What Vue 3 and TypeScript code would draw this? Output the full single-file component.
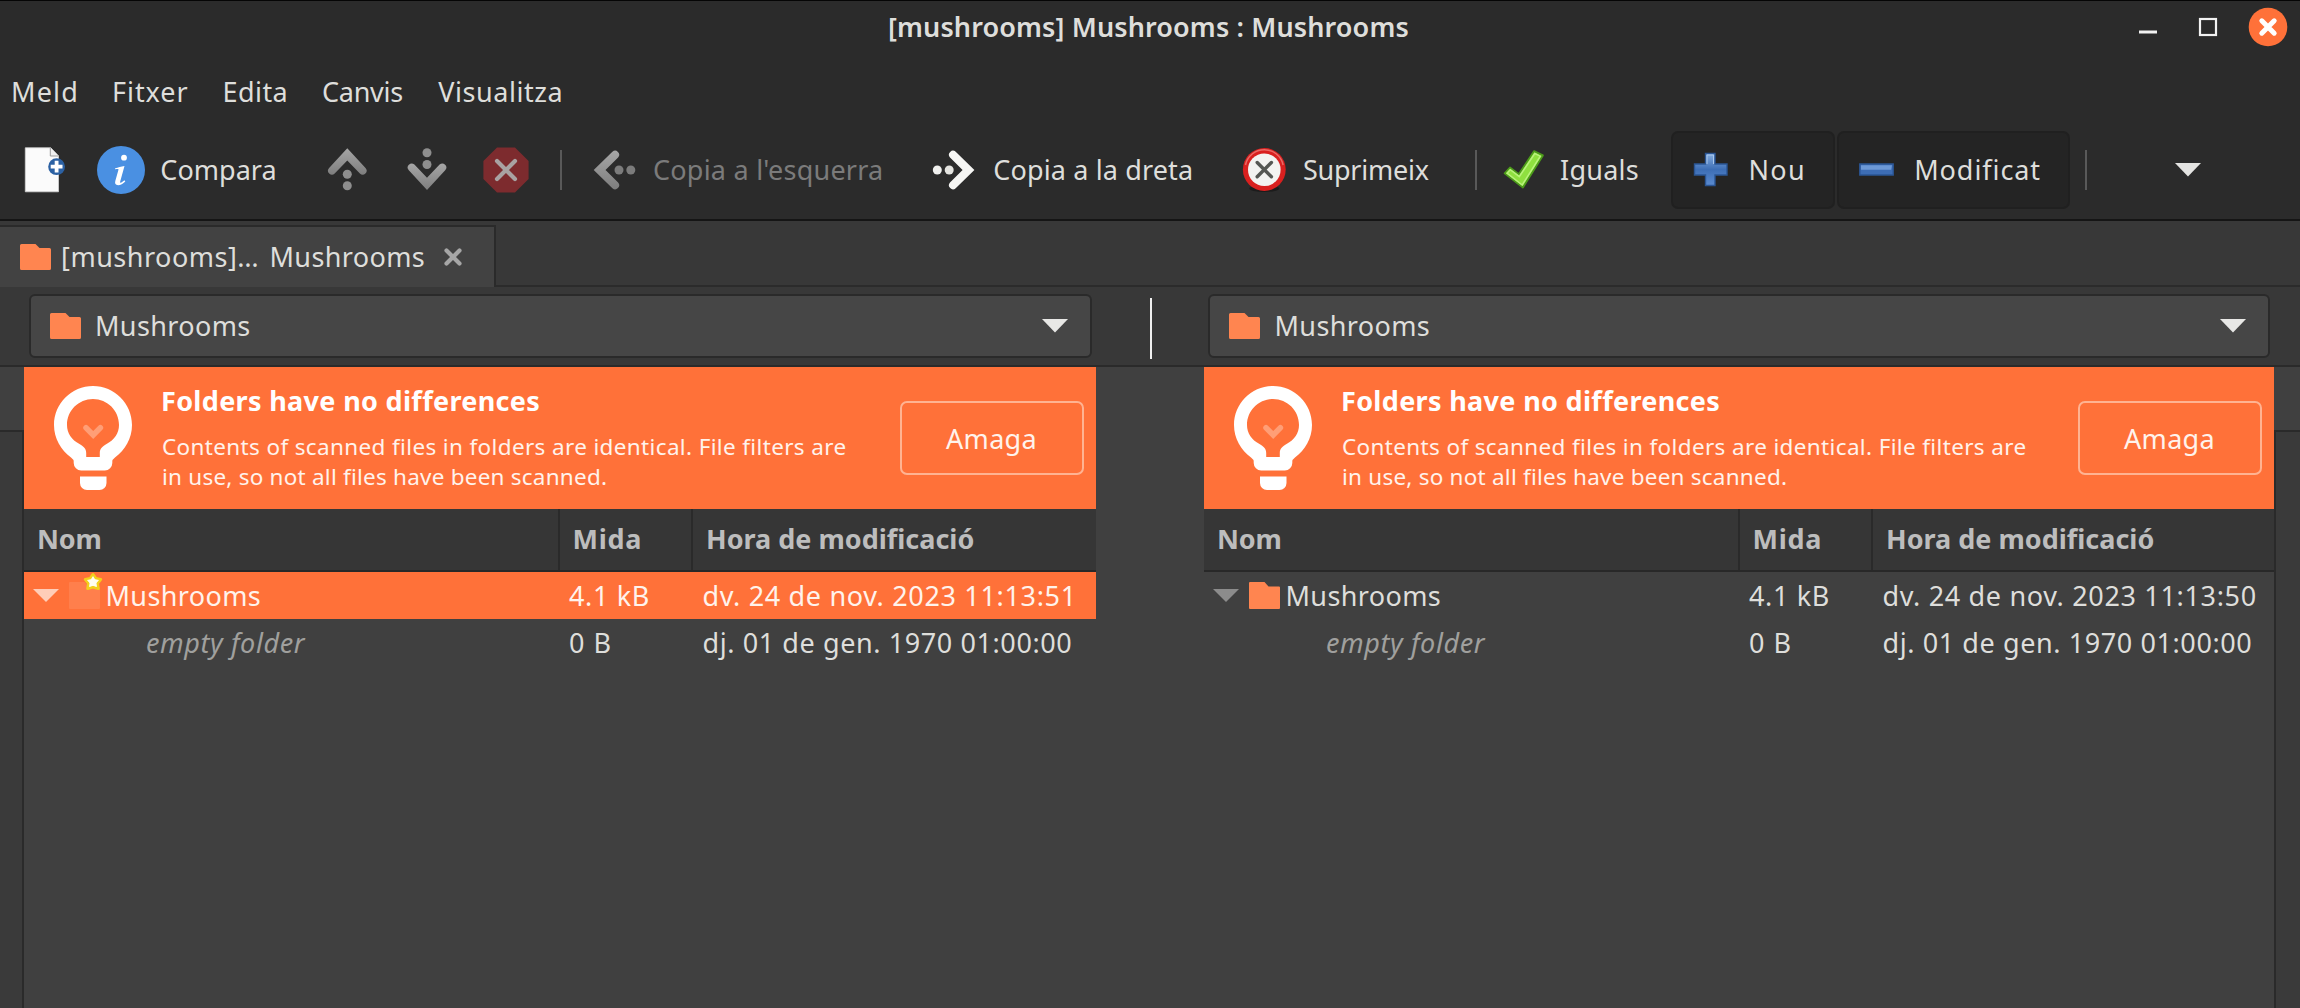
<script setup lang="ts">
interface Label {
  text: string
  spacing: number
}

interface Row {
  name: string
  nameSpacing: number
  size: string
  sizeSpacing: number
  date: string
  dateSpacing: number
  kind: 'folder' | 'empty'
}

interface Pane {
  id: string
  selected: boolean
  rows: Row[]
}

const menus: Label[] = [
  { text: 'Meld', spacing: 1.2 },
  { text: 'Fitxer', spacing: 0.95 },
  { text: 'Edita', spacing: 0.42 },
  { text: 'Canvis', spacing: -0.27 },
  { text: 'Visualitza', spacing: 0.57 },
]

const emptyRow: Row = {
  name: 'empty folder',
  nameSpacing: 0.6,
  size: '0 B',
  sizeSpacing: 1,
  date: 'dj. 01 de gen. 1970 01:00:00',
  dateSpacing: 0.59,
  kind: 'empty',
}

const folderRow = (time: string): Row => ({
  name: 'Mushrooms',
  nameSpacing: 0.38,
  size: '4.1 kB',
  sizeSpacing: 0.65,
  date: `dv. 24 de nov. 2023 ${time}`,
  dateSpacing: 0.67,
  kind: 'folder',
})

const panes: Pane[] = [
  { id: 'left', selected: true, rows: [folderRow('11:13:51'), emptyRow] },
  { id: 'right', selected: false, rows: [folderRow('11:13:50'), emptyRow] },
]

const ls = (px: number) => ({ letterSpacing: `${px}px` })
</script>

<template>
  <div class="window">
    <header class="chrome">
      <div class="titlebar">
        <span class="title">[mushrooms] Mushrooms : Mushrooms</span>
        <div class="controls">
          <svg width="20" height="20" viewBox="0 0 20 20"><path d="M1 13.5h18v3H1z" fill="#f2f2f2" /></svg>
          <svg width="20" height="20" viewBox="0 0 20 20"><rect x="2" y="2" width="16" height="16" fill="none" stroke="#f2f2f2" stroke-width="2.2" /></svg>
          <svg width="40" height="40" viewBox="0 0 40 40">
            <circle cx="20" cy="20" r="19.3" fill="#ff7139" />
            <path d="M13.8 13.8l12.4 12.4M26.2 13.8L13.8 26.2" stroke="#fff" stroke-width="5" stroke-linecap="round" />
          </svg>
        </div>
      </div>

      <nav class="menubar">
        <span v-for="m in menus" :key="m.text" :style="ls(m.spacing)">{{ m.text }}</span>
      </nav>

      <div class="toolbar">
        <svg class="new-doc" width="50" height="50" viewBox="22 143.5 50 50">
          <defs>
            <linearGradient id="metal" x1="0" y1="0" x2="0" y2="1"><stop offset="0" stop-color="#a6a6a6" /><stop offset="1" stop-color="#7e7e7e" /></linearGradient>
            <linearGradient id="blue" x1="0" y1="0" x2="0" y2="1"><stop offset="0" stop-color="#86aee0" /><stop offset=".5" stop-color="#3d6eb5" /><stop offset="1" stop-color="#5b8bd0" /></linearGradient>
          </defs>
          <path d="M25.3 146.3h25.5l7.7 8v36H25.3z" fill="#fbfbfb" stroke="#d4d4d4" stroke-width=".8" />
          <path d="M50.3 146.5v8h8" fill="#f0f0f0" stroke="#9c9c9c" stroke-width="1" />
          <circle cx="56.6" cy="165.2" r="8.4" fill="#2c61a3" />
          <path d="M56.6 159.3v11.8M50.7 165.2h11.8" stroke="#fff" stroke-width="3.8" />
        </svg>
        <div class="tool compare">
          <svg width="48" height="48" viewBox="0 0 48 48">
            <circle cx="24" cy="24" r="24" fill="#4a90e2" />
            <circle cx="27" cy="11.7" r="2.9" fill="#fff" />
            <path d="M18.2 22.2c3-.5 5.8-1.8 9.3-2.2l-4.3 15.4c-.4 1.6.7 1.5 1.9.6l2.3-1.7.9 1.2c-2.3 2.2-4.8 3.7-7.2 3.7-2.6 0-3.5-1.6-2.8-4.1l3.1-11.2c.3-1.1-.1-1.2-3.4-.6z" fill="#fff" />
          </svg>
          <span class="lbl" :style="ls(0.02)">Compara</span>
        </div>
        <svg class="up" width="44" height="50" viewBox="325 143.5 44 50">
          <path d="M347.3 146.7l18.2 19.7a4 4 0 0 1-5.6 5.7l-12.6-13.2-12.6 13.2a4 4 0 0 1-5.6-5.7z" fill="url(#metal)" />
          <circle cx="347.3" cy="172.7" r="4.5" fill="#8e8e8e" />
          <circle cx="347.3" cy="184.3" r="4.5" fill="#8e8e8e" />
        </svg>
        <svg class="down" width="44" height="50" viewBox="405 143.5 44 50">
          <path d="M427 188.500l-18.200-19.700a4 4 0 0 1 5.600-5.700l12.600 13.200 12.600-13.200a4 4 0 0 1 5.600 5.700z" fill="url(#metal)" />
          <circle cx="427" cy="151.2" r="4.5" fill="#8e8e8e" />
          <circle cx="427" cy="163" r="4.5" fill="#8e8e8e" />
        </svg>
        <svg class="stop" width="46" height="46" viewBox="0 0 46 46">
          <path d="M14 .4h18L45.6 14v18L32 45.6H14L.4 32V14z" fill="#7d2b2e" />
          <path d="M14 14l18 18M32 14L14 32" stroke="#a9a2a2" stroke-width="4.2" stroke-linecap="round" />
        </svg>
        <i class="sep s1"></i>
        <div class="tool copy-left">
          <svg width="46" height="42" viewBox="592 148.3 46 42">
            <path d="M593.7 169.300l18.700-18.200a4 4 0 0 1 5.700 5.600l-12.600 12.600 12.600 12.600a4 4 0 0 1-5.700 5.600z" fill="url(#metal)" />
            <circle cx="619" cy="169.3" r="4.5" fill="#7c7c7c" />
            <circle cx="630.8" cy="169.3" r="4.5" fill="#7c7c7c" />
          </svg>
          <span class="lbl" :style="ls(0.23)">Copia a l'esquerra</span>
        </div>
        <div class="tool copy-right">
          <svg width="46" height="42" viewBox="930 148.3 46 42">
            <path d="M974.4 169.300l-18.700-18.200a4 4 0 0 0-5.700 5.600l12.600 12.600-12.600 12.600a4 4 0 0 0 5.700 5.600z" fill="#f6f6f4" />
            <circle cx="949.2" cy="169.3" r="4.5" fill="#e4e4e0" />
            <circle cx="937.3" cy="169.3" r="4.5" fill="#f0f0ee" />
          </svg>
          <span class="lbl" :style="ls(0.14)">Copia a la dreta</span>
        </div>
        <div class="tool delete">
          <svg width="44" height="46" viewBox="1242 145 44 46">
            <ellipse cx="1264.3" cy="186.5" rx="15" ry="3.5" fill="#1c1c1c" />
            <circle cx="1264.3" cy="167.5" r="21.4" fill="#d9201f" />
            <path d="M1245.5 163a19.2 19.2 0 0 1 37.6 0" fill="none" stroke="#ea6a66" stroke-width="1.5" />
            <circle cx="1264.3" cy="167.8" r="16.3" fill="#f3f3f1" />
            <path d="M1257.2 160.5l14.2 14.2M1271.4 160.5l-14.2 14.2" stroke="#555753" stroke-width="3.4" stroke-linecap="round" />
          </svg>
          <span class="lbl" :style="ls(-0.25)">Suprimeix</span>
        </div>
        <i class="sep s2"></i>
        <div class="tool same">
          <svg width="46" height="44" viewBox="1501 145.5 46 44">
            <path d="M1504.6 170.8l5.4-5.8 8.8 6.6 15.3-23 8.8 4.3-20 32.1z" fill="#8fe03f" stroke="#4c9a1a" stroke-width="1.8" stroke-linejoin="round" />
            <path d="M1507 170.7l3.3-3.5 9 7 15.5-23.2 5.5 2.7-18.1 28.8z" fill="none" stroke="#b9f27c" stroke-width="1.5" />
          </svg>
          <span class="lbl" :style="ls(0.25)">Iguals</span>
        </div>
        <div class="toggle new">
          <svg width="35" height="36" viewBox="0 0 35 36">
            <path d="M12.5 1.5H22V12h12v11H22v10.5h-9.5V23h-11V12h11z" fill="url(#blue)" stroke="#2a5594" stroke-width="1.4" />
            <path d="M14 12V3h6.5v9" fill="none" stroke="#a9c7ec" stroke-width="1" />
          </svg>
          <span class="lbl" :style="ls(1.3)">Nou</span>
        </div>
        <div class="toggle modified">
          <svg width="35" height="36" viewBox="0 0 35 36">
            <path d="M.8 12h33.4v11H.8z" fill="#3d6db4" stroke="#2a5594" stroke-width="1.4" />
            <path d="M2 13.2h31l-.8 4.5H2z" fill="#6d99d6" />
          </svg>
          <span class="lbl" :style="ls(0.93)">Modificat</span>
        </div>
        <i class="sep s3"></i>
        <svg class="more" width="26" height="14" viewBox="0 0 26 14"><path d="M0 0h26L13 13.5z" fill="#e4e4e2" /></svg>
      </div>
    </header>

    <div class="tabs">
      <div class="tab">
        <svg class="folder" width="31" height="26" viewBox="0 0 31 26"><path d="M1.5 0h14l4 4h10A1.5 1.5 0 0 1 31 5.500v19a1.500 1.500 0 0 1-1.500 1.500h-28A1.500 1.500 0 0 1 0 24.500v-23A1.500 1.500 0 0 1 1.500 0z" /></svg>
        <span class="t1" :style="ls(0.5)">[mushrooms]…</span>
        <span class="t2" :style="ls(0.38)">Mushrooms</span>
        <svg class="close" width="18" height="18" viewBox="0 0 18 18"><path d="M2.5 2.5l13 13M15.5 2.5l-13 13" stroke="#a6a6a6" stroke-width="4.2" stroke-linecap="round" /></svg>
      </div>
      <div class="tab-rest"></div>
    </div>

    <div class="selectors">
      <template v-for="(p, i) in panes" :key="p.id">
        <i v-if="i > 0" class="divider"></i>
        <div class="combo" :class="p.id">
          <svg class="folder" width="31" height="26" viewBox="0 0 31 26"><path d="M1.5 0h14l4 4h10A1.5 1.5 0 0 1 31 5.500v19a1.500 1.500 0 0 1-1.500 1.500h-28A1.500 1.500 0 0 1 0 24.500v-23A1.500 1.500 0 0 1 1.500 0z" /></svg>
          <span :style="ls(0.38)">Mushrooms</span>
          <svg width="26" height="14" viewBox="0 0 26 14"><path d="M0 0h26L13 13.5z" fill="#e8e8e6" /></svg>
        </div>
      </template>
    </div>

    <main class="work">
      <aside class="map left"><div class="view"></div><div class="rest"></div></aside>
      <section v-for="p in panes" :key="p.id" class="pane" :class="p.id">
        <div class="info">
          <svg class="bulb" width="78" height="104" viewBox="0 0 78 104">
            <path fill-rule="evenodd" fill="#fff" d="M39 0C60.5 0 78 17.5 78 39c0 13.500-7 25-17 32.500q-2.700 2-2.700 4V77a7.500 7.500 0 0 1-7.500 7.500H27.200A7.500 7.500 0 0 1 19.700 77v-1.500q0-2-2.700-4C7 64 0 52.500 0 39 0 17.500 17.500 0 39 0zM39 13C24.600 13 13 24.600 13 39c0 8 4.500 15 12.500 19 4.500 2.500 6.700 5 6.700 9v4h13.600v-4c0-4 2.200-6.500 6.700-9C60.500 54 65 47 65 39 65 24.600 53.400 13 39 13z" />
            <path d="M26 90.500h26.500V97a7 7 0 0 1-7 7H33a7 7 0 0 1-7-7z" fill="#fff" />
            <path d="M32 41.700l7.200 7.300 7.200-7.300" fill="none" stroke="#ff9e76" stroke-width="5.500" stroke-linecap="round" />
          </svg>
          <div class="msg">
            <b>Folders have no differences</b>
            <p><span>Contents of scanned files in folders are identical. File filters are</span><br /><span class="second">in use, so not all files have been scanned.</span></p>
          </div>
          <button class="hide">Amaga</button>
        </div>
        <div class="grid head">
          <div :style="ls(-0.2)">Nom</div>
          <div :style="ls(0.7)">Mida</div>
          <div :style="ls(0)">Hora de modificació</div>
        </div>
        <div v-for="r in p.rows" :key="r.name" class="grid row" :class="{ sel: p.selected && r.kind === 'folder' }">
          <div class="name" :class="r.kind">
            <template v-if="r.kind === 'folder'">
              <svg class="expander" width="26" height="13" viewBox="0 0 26 13"><path d="M0 0h26L13 13z" /></svg>
              <svg class="folder" width="31" height="27" viewBox="0 0 31 27"><path d="M1 0h14.500l4 4.500H30a1 1 0 0 1 1 1V26a1 1 0 0 1-1 1H1a1 1 0 0 1-1-1V1a1 1 0 0 1 1-1z" /></svg>
              <svg v-if="p.selected" class="star" width="20" height="20" viewBox="0 0 20 20"><path d="M10 2.400l2.800 4 5 1-3.200 4.100.8 5.100L10 15.200l-5.400 1.400.8-5.100-3.200-4.100 5-1z" fill="#fffce6" stroke="#f3cf1c" stroke-width="2.8" stroke-linejoin="round" /><path d="M10 4l2 3.300 4 .8-2.700 3 .6 4L10 13.700l-3.900 1.400.6-4-2.700-3 4-.8z" fill="#fffdf0" /></svg>
            </template>
            <span :style="ls(r.nameSpacing)">{{ r.name }}</span>
          </div>
          <div :style="ls(r.sizeSpacing)">{{ r.size }}</div>
          <div :style="ls(r.dateSpacing)">{{ r.date }}</div>
        </div>
      </section>
      <aside class="map right"><div class="view"></div><div class="rest"></div></aside>
    </main>
  </div>
</template>

<style>
body {
  background: #404040;
  overflow: hidden;
}
</style>

<style scoped>
.window {
  width: 2300px;
  height: 1008px;
  display: flex;
  flex-direction: column;
  overflow: hidden;
  font: 27px/36px "Noto Sans", "Open Sans", sans-serif;
  font-variant-ligatures: none;
  white-space: nowrap;
  color: #dededb;
  background: #404040;
}
.window * { box-sizing: border-box; }
svg { display: block; flex: none; }

.chrome {
  height: 221px;
  flex: none;
  background: #2b2b2b;
  border-top: 1px solid #050505;
  border-bottom: 2px solid #151515;
}
.titlebar {
  height: 52px;
  display: grid;
  grid-template-columns: 888px 1fr auto;
  align-items: center;
}
.title {
  grid-column: 2;
  font-weight: 600;
  letter-spacing: 0.12px;
}
.controls { display: flex; align-items: center; padding-right: 12px; }
.controls svg:nth-child(1) { margin-right: 40px; }
.controls svg:nth-child(2) { margin-right: 30px; }

.menubar {
  height: 77px;
  display: grid;
  grid-template-columns: 101px 110.6px 99.4px 116.2px auto;
  align-items: center;
  padding-left: 11px;
}

.toolbar { height: 79px; display: flex; align-items: center; }
.tool, .toggle { display: flex; align-items: center; }
.new-doc { margin-left: 22px; }
.compare { margin-left: 24.8px; width: 228.2px; gap: 15.5px; }
.down { margin-left: 36px; }
.stop { margin-left: 34px; }
.sep { width: 2px; height: 40px; background: #595959; flex: none; }
.s1 { margin-left: 31px; }
.copy-left { margin-left: 30px; width: 338px; gap: 15px; color: #7b7b7b; }
.copy-right { width: 312px; gap: 17.3px; }
.delete { width: 233px; gap: 17px; }
.same { margin-left: 24px; width: 170px; gap: 13px; }
.toggle {
  height: 78px;
  background: #242424;
  border: 2px solid #202020;
  border-radius: 7px;
  flex: none;
}
.new { width: 164px; padding-left: 20px; gap: 20.5px; }
.modified { width: 233px; margin-left: 2px; padding-left: 20px; gap: 20.2px; }
.s3 { margin-left: 15px; }
.more { margin-left: 88px; }

.tabs {
  flex: none;
  height: 66px;
  padding-top: 4px;
  display: flex;
  background: #383838;
}
.tab {
  width: 496px;
  border-top: 2px solid #2a2a2a;
  border-right: 2px solid #2a2a2a;
  background: #424242;
  display: flex;
  align-items: center;
  padding-left: 19.5px;
}
.tab-rest { flex: 1; border-bottom: 2px solid #2b2b2b; }
.folder { fill: #ff8550; }
.t1 { margin-left: 10.5px; width: 208.5px; }
.t2 { width: 174px; }

.selectors {
  flex: none;
  height: 80px;
  display: flex;
  align-items: flex-start;
  padding-top: 7px;
  background: #383838;
  border-bottom: 2px solid #2a2a2a;
}
.combo {
  height: 64px;
  border: 2px solid #2a2a2a;
  border-radius: 6px;
  background: #464646;
  display: flex;
  align-items: center;
  padding: 0 22px 0 19px;
}
.combo span { margin: 0 auto 0 14.5px; }
.combo.left { width: 1063px; margin-left: 28.5px; }
.combo.right { width: 1062px; margin-left: 56px; }
.divider { width: 2px; height: 61px; margin: 4px 0 0 58.5px; background: #f0f0f0; flex: none; }

.work { flex: 1; display: flex; }
.map { display: flex; flex-direction: column; }
.map.left { width: 24px; }
.map.right { width: 26px; }
.view { height: 63px; background: #404040; }
.rest { flex: 1; background: #3a3a3a; border-top: 2px solid #2a2a2a; }
.map.left .rest { border-right: 2px solid #2a2a2a; }
.map.right .rest { border-left: 2px solid #2a2a2a; }

.pane.left { width: 1072px; margin-right: 108px; }
.pane.right { width: 1070px; }
.info {
  height: 142px;
  background: #ff7139;
  color: #fff;
  display: flex;
  align-items: flex-start;
  padding: 0 12.5px 0 30px;
}
.bulb { margin-top: 19px; }
.msg { margin: 16px auto 0 29px; }
.msg b { display: block; letter-spacing: 0.33px; }
.msg p {
  margin: 13px 0 0 1px;
  font-size: 22.5px;
  line-height: 30px;
  letter-spacing: 0.36px;
  color: #fff3ec;
}
.second { letter-spacing: 0.23px; }
.hide {
  width: 184px;
  height: 74px;
  margin-top: 34px;
  padding: 1px 0 0;
  border: 2px solid #ffb392;
  border-radius: 7px;
  background: transparent;
  color: #fff3ec;
  font: inherit;
  letter-spacing: 0.3px;
}
.grid { display: grid; grid-template-columns: 533.5px 133.5px 1fr; }
.head {
  height: 62.5px;
  background: #363636;
  border-bottom: 2px solid #282828;
  font-weight: 700;
  color: #bdbdbd;
}
.head div {
  display: flex;
  align-items: center;
  padding-left: 13px;
}
.head div + div { border-left: 2px solid #2a2a2a; padding-left: 13px; }
.row { height: 47.5px; align-items: center; padding-top: 1px; }
.row > div + div { padding-left: 11.5px; }
.row.sel { background: #ff7139; color: #fff3ec; }
.name { display: flex; align-items: center; position: relative; }
.name.folder { padding-left: 9px; }
.name.folder span { margin-left: 5.5px; }
.name.empty { padding-left: 122px; font-style: italic; color: #a0a09e; }
.expander { margin-right: 10px; fill: #8c8c8c; }
.sel .expander { fill: #ffcdb8; }
.sel .folder { fill: #ff7f4c; }
.star { position: absolute; left: 59px; top: -6px; }
</style>
